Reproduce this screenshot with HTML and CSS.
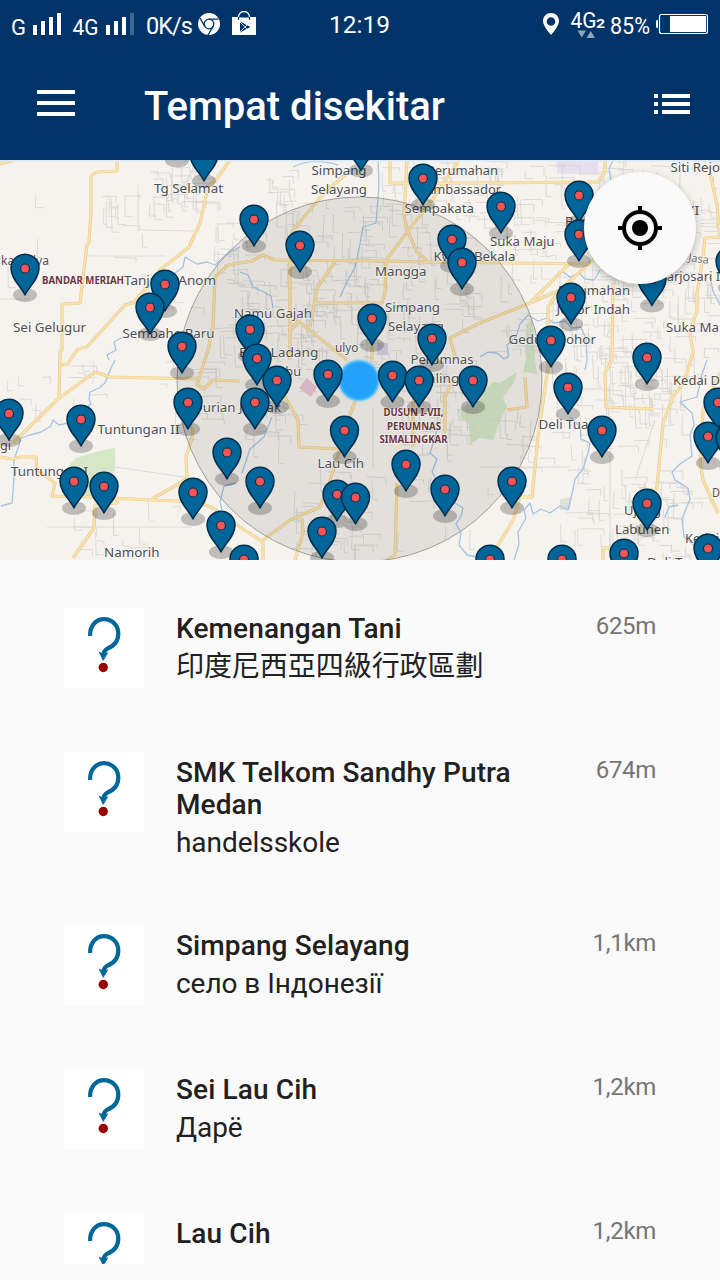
FILE: index.html
```html
<!DOCTYPE html>
<html lang="id">
<head>
<meta charset="utf-8">
<title>Tempat disekitar</title>
<link rel="stylesheet" href="styles.css">
</head>
<body>
<div class="screen">
  <header class="header">
    <div class="status">
      <div class="status-left">
        <svg class="network" width="180" height="48" viewBox="0 0 180 48">
          <g class="status-text">
            <text x="11" y="34.500" font-size="22" textLength="15" lengthAdjust="spacingAndGlyphs">G</text>
            <text x="72.500" y="34.500" font-size="22" textLength="26" lengthAdjust="spacingAndGlyphs">4G</text>
          </g>
          <path fill="#fff" d="M33 25h4v10h-4zM41 21h4v14h-4zM49 17h4v18h-4zM57 13h4v22h-4zM106 25h4v10h-4zM114 21h4v14h-4zM122 17h4v18h-4z"/>
          <path fill="#fff" opacity=".25" d="M130 13h4v22h-4z"/>
        </svg>
        <span class="speed">0K/s</span>
        <svg class="chrome" width="22" height="22" viewBox="-11 -11 22 22">
          <circle r="11" fill="#fff"/>
          <g fill="none" stroke="#003468" stroke-width="1.300">
            <circle r="4.800"/>
            <path d="M0-4.800H9.500M4.200 2.400L-1 11M-4.200 2.400L-9-6"/>
          </g>
        </svg>
        <svg class="store" width="24" height="24" viewBox="0 0 24 24">
          <path fill="#fff" d="M0 6h24v18H0z"/>
          <path fill="none" stroke="#fff" stroke-width="1.300" d="M6.500 8V6a5.500 5.500 0 0 1 11 0v2"/>
          <path fill="none" stroke="#003468" d="M6.500 6v3M17.500 6v3M7 6h10"/>
          <path fill="#003468" d="M8 10.500l10.500 5.500L8 21.500z"/>
          <path stroke="#fff" stroke-width=".8" d="M8 11l7 7M8 21l7-7"/>
        </svg>
      </div>
      <span class="clock">12:19</span>
      <div class="status-right">
        <svg width="168" height="48" viewBox="540 0 168 48">
          <path fill="#fff" fill-rule="evenodd" d="M551 13c-4.500 0-8 3.500-8 8 0 5.500 8 14 8 14s8-8.500 8-14c0-4.500-3.500-8-8-8zm0 4.200a4.300 4.300 0 1 1 0 8.600 4.300 4.300 0 0 1 0-8.600z"/>
          <g class="status-text">
            <text x="570.500" y="28" font-size="22" textLength="26" lengthAdjust="spacingAndGlyphs">4G</text>
            <text x="596" y="28" font-size="13" font-weight="700" textLength="9" lengthAdjust="spacingAndGlyphs">2</text>
            <text x="610" y="33.500" font-size="23" textLength="40" lengthAdjust="spacingAndGlyphs">85%</text>
          </g>
          <path fill="#8ea5bd" d="M577.500 30.500h8.500l-4.200 7zM586.500 38h8.500l-4.200-7z"/>
          <path fill="#fff" d="M658 20h-1q-1 0-1 2v4q0 2 1 2h1zM670 16h36v16h-36z"/>
          <rect x="659.500" y="14.500" width="48" height="19" rx="2" fill="none" stroke="#fff" stroke-width="1.200"/>
        </svg>
      </div>
    </div>
    <div class="appbar">
      <svg class="menu" width="38" height="26" viewBox="0 0 38 26"><path fill="#fff" d="M0 0h38v4H0zM0 11h38v4H0zM0 22h38v4H0z"/></svg>
      <h1 class="title">Tempat disekitar</h1>
      <svg class="list-icon" width="36" height="20" viewBox="0 0 36 20"><path fill="#fff" d="M0 0h4v4H0zM8 0h28v4H8zM0 8h4v4H0zM8 8h28v4H8zM0 16h4v4H0zM8 16h28v4H8z"/></svg>
    </div>
  </header>

  <section class="map">
    <svg class="map-canvas" width="720" height="400" viewBox="0 160 720 400">
      <defs>
        <filter id="glow" x="-20%" y="-20%" width="140%" height="140%"><feGaussianBlur stdDeviation="1.300"/></filter>
        <g id="pin">
          <path fill="#006699" stroke="#002e4d" stroke-width="1.500" stroke-linejoin="round" d="M0 26.500C-3.500 18.500-14 10.500-14-.3A14 14 0 0 1 14-.3C14 10.500 3.500 18.500 0 26.500z"/>
          <circle r="4.500" fill="#ff5252" stroke="#00324f" stroke-width="1.200"/>
        </g>
      </defs>
      <g class="land">
        <path class="park" d="M70 464l6-6 20-6 19-4v22l-8 12-2 14H72z"/>
        <path class="park" d="M482 393l11-11 7 1 17-11-3 11-11 14 4 10-8 16-6 17-13-2-10 6-1-20-9-7 2-10 14-4zM526 324l7-5 2 41 2 14-14-2 3-12z"/>
        <path fill="#e6dff0" d="M557 160h41v14h-41z"/>
        <path fill="#eac4d4" d="M307 378l10 9-6 10-12-9z"/>
        <path fill="#d8cfe8" d="M377 343h11v12h-11z"/>
        <path fill="#dde2d6" d="M560 499l12-2-2 12-10 1z"/>
      </g>
      <path class="street" id="streets"/>
      <g class="river">
        <path d="M240 247l-12 6-13 12-8-3-10 2-12-7-2 10-13 10M123 337l-9 5 2 8-9 5 2 5M115 360l-4 8-6 15-6 5-9 4-1 7 2 5-12 10-11 9-9 2-6-5-2 6-10 6-11 3-9 3-3 10-4 12v18l-1 13-1 12-11 3"/>
        <path d="M378 160l1 25-3 38-13 4-4 22-4 18-9 17-6 13M240 272l8 3 5 12 9 4 9 5 2 12M272 417l-8 20-14 12-8 24M236 483l-12 3-4 16 2 8M293 167q20-10 45-2"/>
        <path d="M437 430l-3 10-4 13 7 6-5 13 4 7M455 503l8 5-2 8-5 8 5 9-2 12 8 10 10 2M613 160l-4 9 2 12M600 270l-6 10-9-1-6-6-9 4-8-6"/>
        <path d="M480 357l8-5 9 1 7 6 5-3-2-11 9-8 4-13 8-9 10 6 9-3 7 5 11-2 7 7 9-1 5 12 1 21-2 10M570 417l10 9 1 13 9 4-2 10-5 16-8 10-3 15-4 16-8-4-10 7-9-4-8 5-3-11-6 7 2 8-8 14 1 12-5 16"/>
        <path d="M707 360l-5 14-5 23-17 5 12 11 2 12-4 10 2 21-12 8-8 8 3 8 13 8 2 11-8 20 2 18 15 12M678 505l-9 2-4 10M710 277l3 14 7 14"/>
      </g>
      <g id="roads"></g>
      <circle class="radius" cx="359.500" cy="379.500" r="182.500"/>
      <path fill="#dceaf6" d="M0 160h720v1.500H0z"/>
      <g class="labels" id="labels"></g>
      <circle cx="359" cy="380.500" r="20.500" fill="#5cc6fa" filter="url(#glow)"/>
      <circle cx="359" cy="380.500" r="19" fill="#22a2fb" filter="url(#glow)"/>
      <g id="shadows" class="shadows"></g>
      <g id="pins"></g>
    </svg>
    <button class="locate" aria-label="Lokasi saya">
      <svg width="48" height="48" viewBox="-24 -24 48 48">
        <circle r="8"/>
        <circle r="16" fill="none" stroke="#000" stroke-width="4"/>
        <path d="M-2-22h4v6h-4zM-2 16h4v6h-4zM-22-2h6v4h-6zM16-2h6v4h-6z"/>
      </svg>
    </button>
  </section>

  <svg width="0" height="0" class="sprite">
    <symbol id="unknown" viewBox="0 0 80 80">
      <path fill="none" stroke="#006699" stroke-width="4.200" d="M26.200 28C25.500 18 32 11.200 40 11.200 48.500 11.200 54.300 18 54.300 25.500 54.300 32.500 50 38 43.500 40.500Q40 42.500 39.600 46"/>
      <path fill="#006699" d="M34.500 43.500l5 2.200 5-1.500-5.300 8.800z"/>
      <circle cx="39.300" cy="59.500" r="4.700" fill="#990000"/>
    </symbol>
  </svg>

  <main class="places">
    <article class="place">
      <svg class="thumb"><use href="#unknown"/></svg>
      <div class="info"><h2 class="name">Kemenangan Tani</h2><p class="desc">印度尼西亞四級行政區劃</p></div>
      <span class="distance">625m</span>
    </article>
    <article class="place">
      <svg class="thumb"><use href="#unknown"/></svg>
      <div class="info"><h2 class="name">SMK Telkom Sandhy Putra Medan</h2><p class="desc">handelsskole</p></div>
      <span class="distance">674m</span>
    </article>
    <article class="place">
      <svg class="thumb"><use href="#unknown"/></svg>
      <div class="info"><h2 class="name">Simpang Selayang</h2><p class="desc">село в Індонезії</p></div>
      <span class="distance">1,1km</span>
    </article>
    <article class="place">
      <svg class="thumb"><use href="#unknown"/></svg>
      <div class="info"><h2 class="name">Sei Lau Cih</h2><p class="desc">Дарё</p></div>
      <span class="distance">1,2km</span>
    </article>
    <article class="place">
      <svg class="thumb"><use href="#unknown"/></svg>
      <div class="info"><h2 class="name">Lau Cih</h2></div>
      <span class="distance">1,2km</span>
    </article>
  </main>
</div>
<script src="map.js"></script>
</body>
</html>
```

FILE: styles.css
```css
* { box-sizing: border-box; }
body {
  margin: 0;
  background: #fafafa;
  font-family: Roboto, "Noto Sans CJK TC", sans-serif;
}
.screen {
  width: 720px;
  height: 1280px;
  overflow: hidden;
  display: flex;
  flex-direction: column;
}
.header {
  height: 160px;
  flex: none;
  background: #003468;
  color: #fff;
}
.status {
  height: 48px;
  display: grid;
  grid-template-columns: 329px 1fr auto;
  grid-template-rows: 48px;
  padding-right: 12px;
}
.status-left { display: flex; align-items: center; }
.network { flex: none; margin-right: -34px; }
.status-text { fill: #fff; font-family: Roboto, sans-serif; }
.speed { width: 52px; font-size: 23.500px; line-height: 48px; padding-top: 3px; letter-spacing: -1px; }
.chrome { flex: none; }
.store { flex: none; margin-left: 12px; margin-top: -2px; }
.clock { font-size: 24.500px; line-height: 50px; }
.status-right { height: 48px; }
.appbar {
  height: 112px;
  display: flex;
  align-items: center;
  padding: 0 30px 0 37px;
}
.menu { margin-top: -2px; }
.title {
  margin: 6px 0 0 69px;
  flex: 1;
  font-size: 40px;
  line-height: 48px;
  font-weight: 500;
  white-space: nowrap;
}
.map { position: relative; height: 400px; flex: none; overflow: hidden; background: #f6f3ee; }
.map-canvas { display: block; }
.park { fill: #d5e7c6; }
.street { fill: none; stroke: #d6d4d1; stroke-width: .8; }
.river path { fill: none; stroke: #a4c4e4; stroke-width: 1.300; stroke-linejoin: round; }
.road-case { fill: none; stroke: #e9cd91; stroke-width: 3.200; stroke-linejoin: round; }
.road { fill: none; stroke: #fae3ac; stroke-width: 1.800; stroke-linejoin: round; }
.radius { fill: rgba(0, 0, 0, .075); stroke: #8b8b88; stroke-width: .8; }
.labels {
  font-family: "Noto Sans", sans-serif;
  font-size: 13px;
  fill: #4c4e52;
  stroke: rgba(255, 255, 255, .55);
  stroke-width: 1.500px;
  paint-order: stroke;
}
.labels .suburb { font-size: 10px; font-weight: 700; fill: #6b3539; }
.shadows { fill: #000; opacity: .22; }
.locate {
  position: absolute;
  top: 12px;
  right: 24px;
  width: 112px;
  height: 112px;
  padding: 0;
  border: 0;
  border-radius: 50%;
  background: #fafafa;
  box-shadow: 0 3px 9px rgba(0, 0, 0, .25);
  display: flex;
  align-items: center;
  justify-content: center;
}
.sprite { position: absolute; }
.places { height: 704px; padding-top: 16px; overflow: hidden; flex: none; }
.place {
  display: flex;
  align-items: flex-start;
  padding: 32px 64px;
  color: #212121;
}
.thumb { width: 80px; height: 80px; background: #fff; flex: none; }
.info { width: 368px; margin-left: 32px; padding-top: 5px; }
.name { margin: 0; font-size: 28px; line-height: 32px; font-weight: 500; letter-spacing: .12px; }
.desc { margin: 0; height: 40px; padding-top: 1px; font-size: 28px; line-height: 41px; letter-spacing: -.05px; white-space: nowrap; }
.distance { margin-left: auto; font-size: 24px; line-height: 36px; letter-spacing: -.3px; color: #757575; }
```

FILE: map.js
```js
const NS = 'http://www.w3.org/2000/svg';

function add(parent, tag, attrs, text) {
  const el = document.createElementNS(NS, tag);
  for (const key in attrs) el.setAttribute(key, attrs[key]);
  if (text) el.textContent = text;
  document.getElementById(parent).appendChild(el);
}

const roads = [
  '117,160 117,171 97,172 91,176 91,212 89,242 87,245 80,303 62,304 62,350 60,352 59,397',
  '230,160 218,177 208,187 200,223 189,247 160,270 147,287 133,303 125,305 87,347 78,349 70,360 68,364 59,365',
  '240,263 228,265 215,277 213,327 208,350 197,385 204,389 213,380 240,381',
  '0,164 15,160', '13,443 58,399 95,372 110,377 197,379',
  '0,457 13,459 20,457 36,457 37,470 55,483 52,496 90,497 152,500 177,501 200,503 213,508 240,527 263,542 263,560',
  '152,499 187,479 186,457 192,438 193,427',
  '117,499 117,503 95,505 94,528 73,558',
  '240,263 252,261 263,255 275,260 387,261 427,262 590,264',
  '345,175 325,192 293,230 290,243 290,360', '289,333 298,321 347,360',
  '335,262 317,288 310,327', '315,303 382,303 385,293 386,262',
  '407,160 404,215 407,230 417,252 427,261', '458,162 430,203 407,232 385,262',
  '390,160 390,183 480,183 598,182 605,172 605,160', '372,340 372,360',
  '456,360 450,338 480,323 530,303 570,263', '595,258 560,290 530,303', '558,292 548,307 548,367 538,437 532,497 520,497 513,520 497,547',
  '613,283 612,360 605,373 606,407 653,409',
  '710,173 717,205 720,237 705,238 703,257 697,293 697,310 690,333 693,352 685,380 673,397 663,423 657,487 640,523',
  '720,373 703,410 700,463 703,480 718,513', '620,548 603,548 603,560',
  '283,393 298,420 299,447 340,449 328,487 320,507 290,520 263,540', '302,518 303,533 295,560',
  '397,483 395,555 387,560', '413,400 413,447', '453,380 445,397 445,433', '359,390 340,443', '525,377 527,407 507,410'
];
for (const cls of ['road-case', 'road']) {
  for (const points of roads) add('roads', 'polyline', { class: cls, points });
}

// Residential street zones: x, y, width, height, number of streets
const zones = [
  [150, 160, 50, 48, 34], [100, 195, 26, 14, 12], [210, 220, 40, 130, 50], [265, 168, 25, 40, 14],
  [285, 200, 90, 115, 80], [380, 160, 120, 60, 50], [395, 225, 80, 100, 45], [245, 265, 75, 90, 42],
  [300, 300, 120, 80, 52], [400, 360, 75, 85, 50], [480, 165, 120, 95, 60], [590, 160, 130, 125, 85],
  [490, 265, 115, 90, 48], [600, 275, 115, 95, 72], [605, 365, 80, 50, 44], [550, 330, 60, 100, 32],
  [485, 410, 60, 80, 18], [550, 430, 120, 100, 38], [625, 480, 70, 40, 24], [290, 455, 80, 95, 44],
  [240, 380, 60, 80, 20], [160, 360, 60, 60, 20], [0, 355, 100, 60, 14], [60, 500, 120, 50, 12],
  [0, 160, 150, 180, 5], [120, 210, 90, 120, 9], [370, 460, 100, 90, 10], [600, 515, 120, 44, 22]
];
let seed = 7;
const rnd = () => (seed = (seed * 16807) % 2147483647) / 2147483647;
let d = '';
for (const [x, y, w, h, n] of zones) {
  for (let i = 0; i < n; i++) {
    const px = x + rnd() * w, py = y + rnd() * h;
    const len = 6 + rnd() * 20, skew = rnd() * 2 - 1;
    const side = 3 + rnd() * 6;
    d += rnd() < .5
      ? `M${px.toFixed(1)} ${py.toFixed(1)}l${len.toFixed(1)} ${skew.toFixed(1)}v${side.toFixed(1)}`
      : `M${px.toFixed(1)} ${py.toFixed(1)}l${skew.toFixed(1)} ${len.toFixed(1)}h${side.toFixed(1)}`;
  }
}
d += 'M87 256H165M138 185v46M138 230l55 1M197 160l-10 22M0 299h30M47 527h145M115 467l75 11M430 453l-35 8M373 408v60M575 530v30M610 440v110M480 467h90M655 420l-20 60';
document.getElementById('streets').setAttribute('d', d);

// Place names: text, left, right, baseline
const labels = [
  ['Tg Selamat', 154, 223, 193], ['Simpang', 311.5, 366.5, 175], ['Selayang', 311, 367, 194],
  ['Perumahan', 427, 498, 175], ['Ambassador', 425, 501, 194], ['Sempakata', 404.5, 474, 213],
  ['Suka Maju', 490, 554.5, 246], ['Kwala Bekala', 433.5, 515.5, 261], ['Mangga', 375, 426.500, 276],
  ['Namu Gajah', 234, 312, 318], ['Simpang', 385, 440, 312], ['Selayang', 388, 444, 331],
  ['Perumnas', 410.5, 473.5, 364], ['Simalingkar', 404, 480, 383], ['ulyo', 335, 358.500, 352],
  ['Bela Ladang', 239, 318.5, 357], ['Bambu', 258, 301, 376], ['Tanjung Anom', 124, 216, 285],
  ['Sembahe Baru', 122.5, 214.5, 338], ['Sei Gelugur', 13, 86, 331.5], ['kamulya', 1, 49, 265],
  ['Durian Jangak', 193, 281, 412], ['Tuntungan II', 97.5, 179.5, 434], ['Tuntungan I', 11, 88, 476],
  ['gi', 0, 11, 450], ['Namorih', 104, 159.500, 556.5], ['Lau Cih', 317.5, 364, 468],
  ['Siti Rejo', 670.5, 720, 172], ['XI', 686, 699.5, 215], ['Marjosari I', 655, 720, 281],
  ['Perumahan', 558, 630, 295], ['Johor Indah', 556.5, 630, 314], ['Gedung Johor', 508.5, 596, 343.5],
  ['Suka Ma', 666, 719, 332], ['Kedai D', 673, 720, 384.5], ['Deli Tua', 538.5, 588.5, 429],
  ['Ujung', 624, 661, 515], ['Labuhen', 615, 669.5, 534], ['Kedai', 685, 719, 543],
  ['D', 712, 720, 497], ['Baru', 565, 594, 226], ['Deli Tua', 647, 698, 567]
];
for (const [text, left, right, y] of labels) {
  add('labels', 'text', { x: left, y, textLength: right - left, lengthAdjust: 'spacingAndGlyphs' }, text);
}
add('labels', 'text', { x: 688, y: 261, 'font-size': 11, fill: '#777', transform: 'rotate(8 688 261)' }, 'Jasa');
for (const [text, left, right, y] of [
  ['BANDAR MERIAH', 42, 124, 283.5], ['DUSUN I-VII,', 383.5, 443.5, 415.5],
  ['PERUMNAS', 387, 441, 429.5], ['SIMALINGKAR', 379.5, 447.5, 442.5]
]) {
  add('labels', 'text', { class: 'suburb', x: left, y, textLength: right - left, lengthAdjust: 'spacingAndGlyphs' }, text);
}

const pins = [
  [177, 134], [204, 154.5], [361, 144], [25, 268.5], [165, 284.5], [150, 307.5], [182, 346.5], [254, 219.5],
  [300, 245.5], [423, 178.5], [452, 239.5], [462, 262.5], [250, 329.5], [257, 358.5], [372, 318.5],
  [432, 338.5], [501, 206.5], [579, 195.5], [579, 234.5], [571, 297.5], [551, 340.5], [647, 357.5],
  [652, 279], [730, 261.5], [9, 413.5], [81, 419.5], [188, 402.5], [227, 452.5], [74, 481.5],
  [104, 486.5], [193, 492.5], [221, 525.5], [244, 559.5], [277, 380.5], [255, 402.5], [328, 374.5],
  [392.500, 375.5], [419, 380.5], [473, 380.5], [344.500, 430.5], [406, 464.5], [445, 489.5], [260, 481.5],
  [337, 494.5], [355.500, 497.5], [322, 531.5], [490, 559.5], [568, 387.5], [602, 430.5], [512, 481.5],
  [647, 503.5], [718, 402.5], [708, 436.5], [730, 438], [562, 559.5], [624, 553.5], [708, 548.5]
].sort((a, b) => a[1] - b[1]);
for (const [x, y] of pins) {
  add('shadows', 'ellipse', { cx: x, cy: y + 26.5, rx: 12, ry: 7 });
  if (y + 26.5 > 161) add('pins', 'use', { href: '#pin', x, y });
}
```
